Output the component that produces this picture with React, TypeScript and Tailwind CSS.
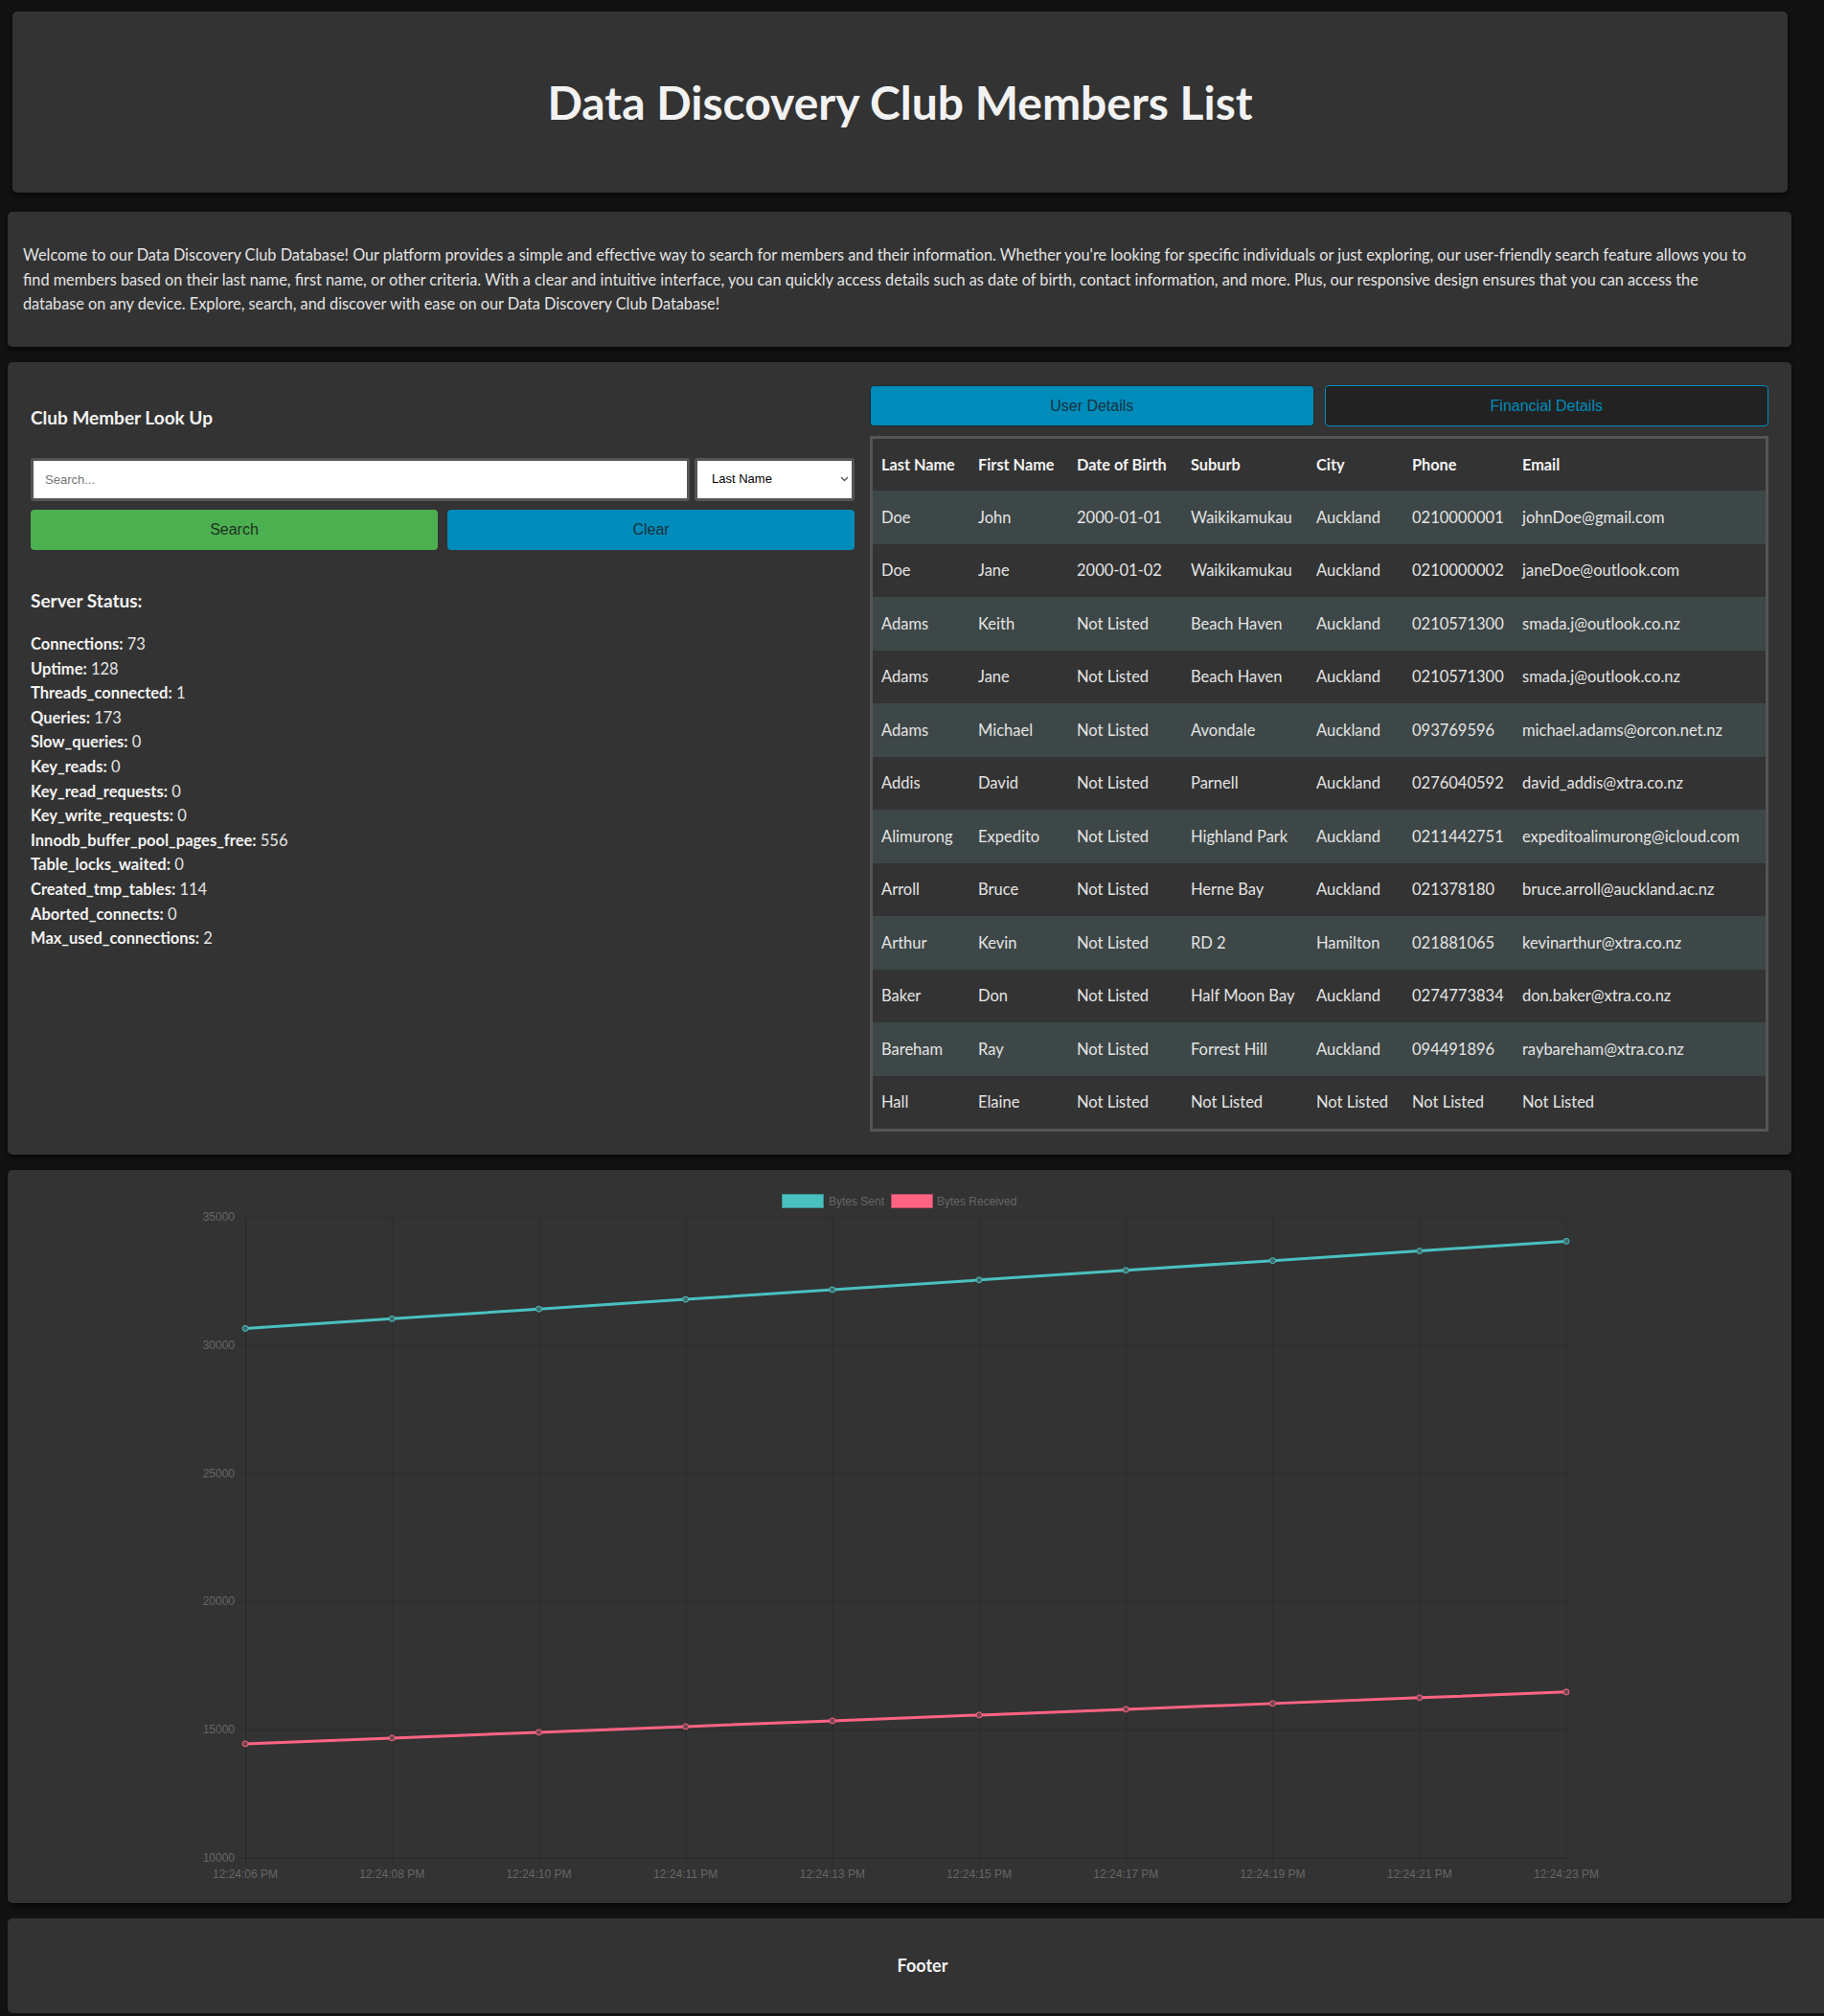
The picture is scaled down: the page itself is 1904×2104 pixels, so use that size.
import React from 'react';

const members = [
  ['Doe', 'John', '2000-01-01', 'Waikikamukau', 'Auckland', '0210000001', 'johnDoe@gmail.com'],
  ['Doe', 'Jane', '2000-01-02', 'Waikikamukau', 'Auckland', '0210000002', 'janeDoe@outlook.com'],
  ['Adams', 'Keith', 'Not Listed', 'Beach Haven', 'Auckland', '0210571300', 'smada.j@outlook.co.nz'],
  ['Adams', 'Jane', 'Not Listed', 'Beach Haven', 'Auckland', '0210571300', 'smada.j@outlook.co.nz'],
  ['Adams', 'Michael', 'Not Listed', 'Avondale', 'Auckland', '093769596', 'michael.adams@orcon.net.nz'],
  ['Addis', 'David', 'Not Listed', 'Parnell', 'Auckland', '0276040592', 'david_addis@xtra.co.nz'],
  ['Alimurong', 'Expedito', 'Not Listed', 'Highland Park', 'Auckland', '0211442751', 'expeditoalimurong@icloud.com'],
  ['Arroll', 'Bruce', 'Not Listed', 'Herne Bay', 'Auckland', '021378180', 'bruce.arroll@auckland.ac.nz'],
  ['Arthur', 'Kevin', 'Not Listed', 'RD 2', 'Hamilton', '021881065', 'kevinarthur@xtra.co.nz'],
  ['Baker', 'Don', 'Not Listed', 'Half Moon Bay', 'Auckland', '0274773834', 'don.baker@xtra.co.nz'],
  ['Bareham', 'Ray', 'Not Listed', 'Forrest Hill', 'Auckland', '094491896', 'raybareham@xtra.co.nz'],
  ['Hall', 'Elaine', 'Not Listed', 'Not Listed', 'Not Listed', 'Not Listed', 'Not Listed'],
];

const headers = ['Last Name', 'First Name', 'Date of Birth', 'Suburb', 'City', 'Phone', 'Email'];
const colWidths = [101, 103, 119, 131, 100, 115, 263];

const status: [string, string][] = [
  ['Connections', '73'],
  ['Uptime', '128'],
  ['Threads_connected', '1'],
  ['Queries', '173'],
  ['Slow_queries', '0'],
  ['Key_reads', '0'],
  ['Key_read_requests', '0'],
  ['Key_write_requests', '0'],
  ['Innodb_buffer_pool_pages_free', '556'],
  ['Table_locks_waited', '0'],
  ['Created_tmp_tables', '114'],
  ['Aborted_connects', '0'],
  ['Max_used_connections', '2'],
];

const times = [
  '12:24:06 PM', '12:24:08 PM', '12:24:10 PM', '12:24:11 PM', '12:24:13 PM',
  '12:24:15 PM', '12:24:17 PM', '12:24:19 PM', '12:24:21 PM', '12:24:23 PM',
];

// chart geometry, relative to the chart card
const left = 248;
const right = 1627;
const top = 49;
const bottom = 718;
const step = (right - left) / 9;
const xOf = (i: number) => left + i * step;
const yOf = (v: number) => top + ((35000 - v) * (bottom - top)) / 25000;

const sent = times.map((_, i) => 30650 + (i * (34050 - 30650)) / 9);
const received = times.map((_, i) => 14450 + (i * (16470 - 14450)) / 9);

const TrafficChart = () => {
  const ticks = [35000, 30000, 25000, 20000, 15000, 10000];
  const line = (vals: number[]) => vals.map((v, i) => `${xOf(i)},${yOf(v)}`).join(' ');
  return (
    <svg width="1862" height="765" className="block">
      {/* legend */}
      <rect x="808.5" y="25.5" width="43" height="14" fill="#4bc0c0" stroke="#3a8f8f" />
      <text x="857" y="37" fontSize="12" fill="#666" fontFamily="Liberation Sans, Arial, sans-serif">Bytes Sent</text>
      <rect x="922.5" y="25.5" width="43" height="14" fill="#ff6384" stroke="#b84a60" />
      <text x="970" y="37" fontSize="12" fill="#666" fontFamily="Liberation Sans, Arial, sans-serif">Bytes Received</text>

      {/* horizontal grid */}
      {ticks.map((t) => (
        <g key={t}>
          <line x1={left - 8} x2={right} y1={yOf(t) + 0.5} y2={yOf(t) + 0.5} stroke={t === 10000 ? '#282828' : '#2d2d2d'} />
          <text x={left - 11} y={yOf(t) + 4} fontSize="12" fill="#666" textAnchor="end" fontFamily="Liberation Sans, Arial, sans-serif">
            {t}
          </text>
        </g>
      ))}

      {/* vertical grid */}
      {times.map((t, i) => (
        <g key={t}>
          <line x1={xOf(i) + 0.5} x2={xOf(i) + 0.5} y1={top} y2={bottom + 8} stroke={i === 0 ? '#282828' : '#2d2d2d'} />
          <text x={xOf(i)} y={739} fontSize="12" fill="#666" textAnchor="middle" fontFamily="Liberation Sans, Arial, sans-serif">
            {t}
          </text>
        </g>
      ))}

      <polyline points={line(sent)} fill="none" stroke="#4bc0c0" strokeWidth="3" />
      <polyline points={line(received)} fill="none" stroke="#ff6384" strokeWidth="3" />
      {sent.map((v, i) => (
        <circle key={'s' + i} cx={xOf(i)} cy={yOf(v)} r="3" fill="#3f6b6b" stroke="#4bc0c0" strokeWidth="1" />
      ))}
      {received.map((v, i) => (
        <circle key={'r' + i} cx={xOf(i)} cy={yOf(v)} r="3" fill="#6e4550" stroke="#ff6384" strokeWidth="1" />
      ))}
    </svg>
  );
};

const App = () => {
  return (
    <div className="min-h-screen w-full overflow-x-hidden bg-[#121212] font-[Lato,'Open_Sans',sans-serif] text-base leading-[1.6] text-[#e4e4e4]">
      <div className="pt-3 pl-2">
        {/* Header */}
        <header className="mx-[5px] flex h-[189px] w-[1853px] items-center justify-center rounded-[5px] bg-[#333] shadow-[0_3px_6px_rgba(0,0,0,0.6)]">
          <h1 className="text-[48px] font-bold leading-none text-[#f2f2f2]">Data Discovery Club Members List</h1>
        </header>

        {/* Intro */}
        <section className="mt-5 flex h-[141px] w-[1862px] items-center rounded-[5px] bg-[#333] px-4 shadow-[0_3px_6px_rgba(0,0,0,0.6)]">
          <p className="max-w-[1810px] text-[16.3px] leading-[25.6px]">
            Welcome to our Data Discovery Club Database! Our platform provides a simple and effective way to search for members and their information. Whether you're looking for specific individuals or just exploring, our user-friendly search feature allows you to find members based on their last name, first name, or other criteria. With a clear and intuitive interface, you can quickly access details such as date of birth, contact information, and more. Plus, our responsive design ensures that you can access the database on any device. Explore, search, and discover with ease on our Data Discovery Club Database!
          </p>
        </section>

        {/* Main */}
        <section className="mt-4 grid w-[1862px] grid-cols-[860px_938px] gap-4 rounded-[5px] bg-[#333] p-6 shadow-[0_3px_6px_rgba(0,0,0,0.6)]">
          <div>
            <h2 className="mt-[18px] text-[19px] font-bold leading-8 text-[#f2f2f2]">Club Member Look Up</h2>
            <div className="mt-[26px] flex gap-[5px]">
              <input
                placeholder="Search..."
                className="h-[45px] flex-1 rounded-[3px] border-[3px] border-[#555] bg-white pl-3 font-['Liberation_Sans',Arial,sans-serif] text-[13px] text-black placeholder:text-[#757575]"
              />
              <div className="relative w-[167px]">
                <select className="h-[45px] w-full appearance-none rounded-[3px] border-[3px] border-[#555] bg-white pl-[15px] font-['Liberation_Sans',Arial,sans-serif] text-[13px] text-black">
                  <option>Last Name</option>
                  <option>First Name</option>
                </select>
                <svg className="pointer-events-none absolute right-[6px] top-[19px]" width="9" height="6" viewBox="0 0 9 6">
                  <path d="M1 1l3.5 3.5L8 1" fill="none" stroke="#555" strokeWidth="1.3" />
                </svg>
              </div>
            </div>
            <div className="mt-[9px] flex gap-[10px] font-['Liberation_Sans',Arial,sans-serif] text-[16px]">
              <button className="h-[42px] flex-1 rounded-[4px] bg-[#4caf50] text-[#1e3320]">Search</button>
              <button className="h-[42px] flex-1 rounded-[4px] bg-[#008cba] text-[#17303c]">Clear</button>
            </div>
            <h3 className="mt-[37px] text-[19px] font-bold leading-8 text-[#f2f2f2]">Server Status:</h3>
            <ul className="mt-[17px] text-[16.5px] leading-[25.6px]">
              {status.map(([k, v]) => (
                <li key={k}>
                  <span className="font-bold text-[#f2f2f2]">{k}:</span> {v}
                </li>
              ))}
            </ul>
          </div>

          <div>
            <div className="grid grid-cols-2 gap-[11px] font-['Liberation_Sans',Arial,sans-serif] text-[16px]">
              <button className="h-[43px] rounded-[4px] border border-[#1e2a30] bg-[#008cba] text-[#16313f]">User Details</button>
              <button className="h-[43px] rounded-[4px] border border-[#008cba] bg-[#222] text-[#008cba]">Financial Details</button>
            </div>
            <div className="mt-[10px] border-[3px] border-[#555]">
              <table className="w-full table-fixed border-collapse">
                <colgroup>
                  {colWidths.map((w, i) => (
                    <col key={i} style={{ width: w }} />
                  ))}
                </colgroup>
                <thead>
                  <tr className="h-[54px] bg-[#333]">
                    {headers.map((h) => (
                      <th key={h} className="whitespace-nowrap pl-[9px] text-left text-[16.3px] font-bold text-[#f2f2f2]">
                        {h}
                      </th>
                    ))}
                  </tr>
                </thead>
                <tbody>
                  {members.map((row, r) => (
                    <tr key={r} className={`h-[55.5px] ${r % 2 === 0 ? 'bg-[#3e4747]' : 'bg-[#333]'}`}>
                      {row.map((c, i) => (
                        <td key={i} className="whitespace-nowrap pl-[9px] text-[16.5px]">
                          {c}
                        </td>
                      ))}
                    </tr>
                  ))}
                </tbody>
              </table>
            </div>
          </div>
        </section>

        {/* Chart */}
        <section className="mt-4 h-[765px] w-[1862px] rounded-[5px] bg-[#333] shadow-[0_3px_6px_rgba(0,0,0,0.6)]">
          <TrafficChart />
        </section>

        {/* Footer */}
        <footer className="mt-4 flex h-[99px] w-[1910px] items-center justify-center rounded-[5px] bg-[#333]">
          <span className="text-[18px] font-bold text-[#f2f2f2]">Footer</span>
        </footer>
      </div>
    </div>
  );
};

export default App;
